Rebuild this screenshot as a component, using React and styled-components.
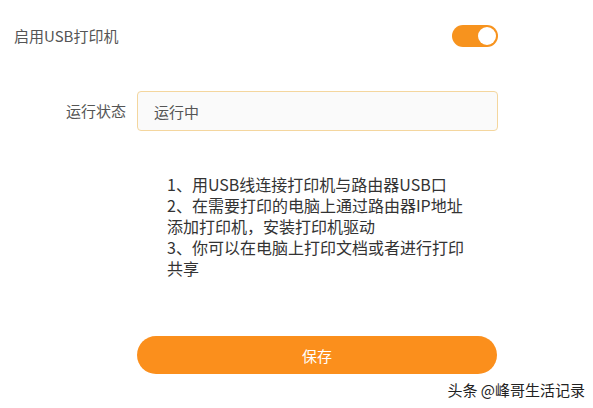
import React, { useState } from 'react';
import styled, { createGlobalStyle } from 'styled-components';

const GlobalStyle = createGlobalStyle`
  html, body {
    margin: 0;
    padding: 0;
    background: #ffffff;
  }
  body {
    font-family: "Noto Sans CJK SC", "Noto Sans", sans-serif;
  }
`;

const Page = styled.div`
  position: relative;
  width: 593px;
  height: 408px;
  background: #fff;
  overflow: hidden;
`;

const Form = styled.div`
  padding: 25px 95px 0 14px;
  display: flex;
  flex-direction: column;
`;

const SwitchRow = styled.div`
  display: flex;
  align-items: center;
  justify-content: space-between;
  height: 22px;
`;

const Label = styled.span`
  font-size: 15px;
  color: #555;
  line-height: 22px;
`;

const Toggle = styled.button`
  position: relative;
  width: 46px;
  height: 22px;
  border: none;
  padding: 0;
  border-radius: 11px;
  background: ${p => (p.$on ? '#f7931e' : '#ccc')};
  cursor: pointer;

  &::after {
    content: '';
    position: absolute;
    top: 2px;
    left: ${p => (p.$on ? '26px' : '2px')};
    width: 18px;
    height: 18px;
    border-radius: 50%;
    background: #fff;
  }
`;

const FieldRow = styled.div`
  display: grid;
  grid-template-columns: 112px 1fr;
  column-gap: 11px;
  align-items: center;
  margin-top: 44px;
`;

const FieldLabel = styled(Label)`
  text-align: right;
`;

const StatusBox = styled.div`
  height: 40px;
  box-sizing: border-box;
  border: 1px solid #f4d69e;
  border-radius: 4px;
  background: #fafafa;
  padding: 0 16px;
  display: flex;
  align-items: center;
  font-size: 15px;
  color: #555;
`;

const Notes = styled.div`
  margin: 43px 0 0 153px;
  width: 305px;
  font-size: 16px;
  line-height: 21px;
  color: #333;
`;

const NoteLine = styled.div`
  height: auto;
`;

const SaveButton = styled.button`
  margin: 57px 0 0 123px;
  width: 360px;
  height: 38px;
  border: none;
  border-radius: 19px;
  background: #fb8f1c;
  color: #fff;
  font-family: inherit;
  font-size: 15px;
  cursor: pointer;
`;

const Watermark = styled.div`
  position: absolute;
  right: 8px;
  bottom: 8px;
  font-size: 15px;
  color: #222;
`;

const notes = [
  '1、用USB线连接打印机与路由器USB口',
  '2、在需要打印的电脑上通过路由器IP地址添加打印机，安装打印机驱动',
  '3、你可以在电脑上打印文档或者进行打印共享'
];

export default function App() {
  const [enabled, setEnabled] = useState(true);

  return (
    <Page>
      <GlobalStyle />
      <Form>
        <SwitchRow>
          <Label>启用USB打印机</Label>
          <Toggle $on={enabled} onClick={() => setEnabled(!enabled)} />
        </SwitchRow>

        <FieldRow>
          <FieldLabel>运行状态</FieldLabel>
          <StatusBox>运行中</StatusBox>
        </FieldRow>

        <Notes>
          {notes.map(line => (
            <NoteLine key={line}>{line}</NoteLine>
          ))}
        </Notes>

        <SaveButton>保存</SaveButton>
      </Form>
      <Watermark>头条 @峰哥生活记录</Watermark>
    </Page>
  );
}
